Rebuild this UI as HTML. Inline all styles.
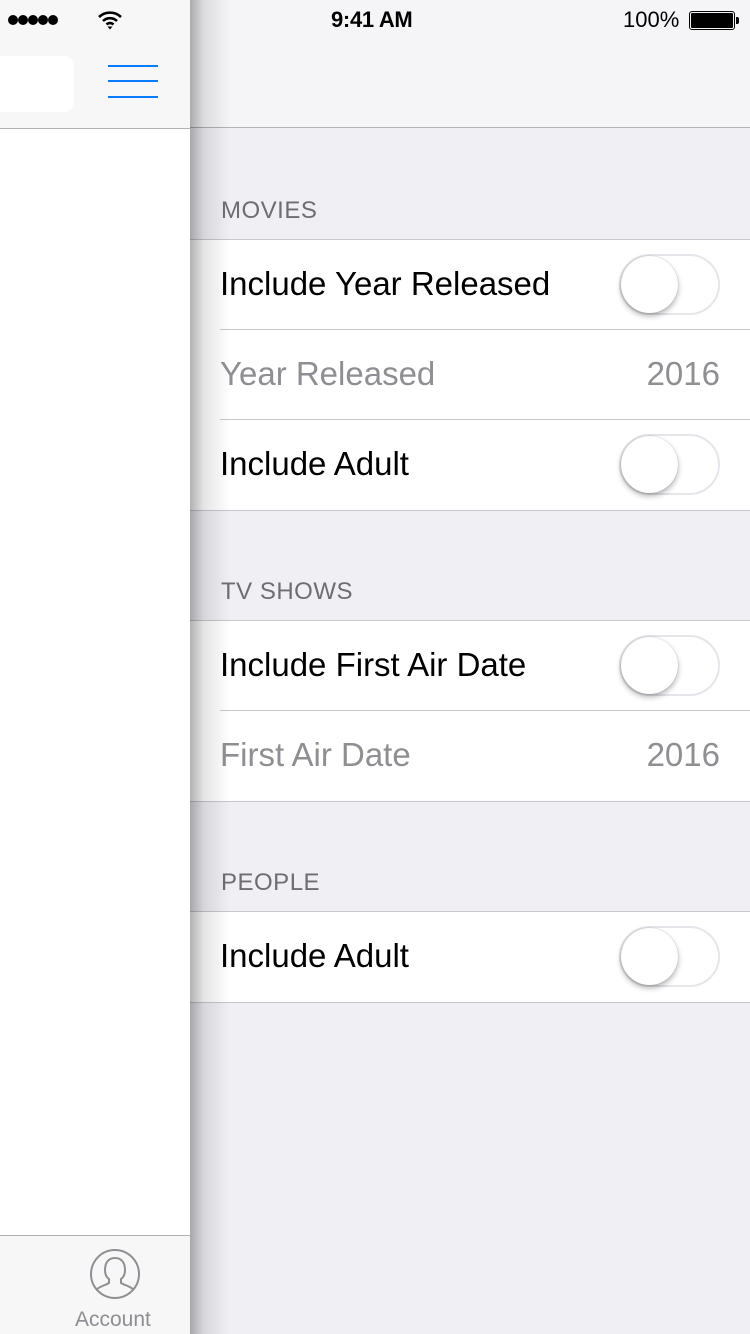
<!DOCTYPE html>
<html><head><meta charset="utf-8"><style>
*{margin:0;padding:0;box-sizing:border-box}
body{width:750px;height:1334px;overflow:hidden;background:#efeff4;font-family:"Liberation Sans",sans-serif;position:relative}
.a{position:absolute}
.nav{left:0;top:0;width:750px;height:128px;background:#f5f5f7;border-bottom:1px solid #b2b2b2}
.hdr{left:221px;font-size:24px;color:#6d6d72;letter-spacing:.5px}
.grp{left:190px;width:560px;background:#fff;border-top:1px solid #c8c7cc;border-bottom:1px solid #c8c7cc}
.row{height:90px;position:relative;border-bottom:1px solid #c8c7cc;margin-left:30px;font-size:33px;line-height:87px;color:#000}
.row:last-child{border-bottom:none}
.g{color:#8e8e93}
.v{position:absolute;right:30px;top:0;color:#8e8e93}
.sw{position:absolute;right:30px;top:14px;width:101px;height:61px;border-radius:31px;border:2px solid #e5e5ea;background:#fff}
.sw:after{content:"";position:absolute;left:0;top:0;width:57px;height:57px;border-radius:50%;background:#fff;box-shadow:0 3px 6px rgba(0,0,0,.3),0 0 1px rgba(0,0,0,.3)}
</style></head><body>
<div class="a nav"></div>
<div class="a" style="left:331px;top:7px;font-size:22px;font-weight:bold;letter-spacing:-0.3px">9:41 AM</div>
<div class="a" style="left:623px;top:7px;font-size:22px;">100%</div>
<div class="a" style="left:689px;top:11px;width:46px;height:19px;border:1.5px solid #000;border-radius:3px;padding:1px"><div style="width:100%;height:100%;background:#000;border-radius:1px"></div></div>
<div class="a" style="left:736px;top:17px;width:3px;height:7px;background:#000;border-radius:0 2px 2px 0"></div>

<div class="a hdr" style="top:197px">MOVIES</div>
<div class="a grp" style="top:239px">
<div class="row">Include Year Released<div class="sw"></div></div>
<div class="row g">Year Released<span class="v">2016</span></div>
<div class="row">Include Adult<div class="sw"></div></div>
</div>
<div class="a hdr" style="top:578px">TV SHOWS</div>
<div class="a grp" style="top:620px">
<div class="row">Include First Air Date<div class="sw"></div></div>
<div class="row g">First Air Date<span class="v">2016</span></div>
</div>
<div class="a hdr" style="top:869px">PEOPLE</div>
<div class="a grp" style="top:911px">
<div class="row">Include Adult<div class="sw"></div></div>
</div>

<!-- left panel -->
<div class="a" style="left:190px;top:0;width:40px;height:1334px;background:linear-gradient(90deg,rgba(0,0,0,.3),rgba(0,0,0,.1) 35%,rgba(0,0,0,0))"></div>
<div class="a" style="left:0;top:0;width:190px;height:1334px;background:#fff">
<div class="a" style="left:0;top:0;width:190px;height:129px;background:#f7f7f7;border-bottom:1px solid #b2b2b2"></div>
<svg class="a" style="left:8px;top:13px" width="50" height="14" viewBox="0 0 50 14"><g fill="#000"><circle cx="5" cy="7" r="5"/><circle cx="15" cy="7" r="5"/><circle cx="25" cy="7" r="5"/><circle cx="35" cy="7" r="5"/><circle cx="45" cy="7" r="5"/></g></svg>
<svg class="a" style="left:97px;top:10px" width="26" height="20" viewBox="0 0 26 20"><path d="M2 7a16 16 0 0 1 22 0M6 11a10 10 0 0 1 14 0M9.5 14.5a5 5 0 0 1 7 0" stroke="#000" stroke-width="2.6" fill="none"/><path d="M10.5 16.5 13 19.5 15.5 16.5z" fill="#000"/></svg>
<div class="a" style="left:-10px;top:56px;width:84px;height:56px;background:#fff;border-radius:10px"></div>
<div class="a" style="left:108px;top:65px;width:50px;height:2px;background:#0a7aff"></div>
<div class="a" style="left:108px;top:80px;width:50px;height:2px;background:#0a7aff"></div>
<div class="a" style="left:108px;top:96px;width:50px;height:2px;background:#0a7aff"></div>
<div class="a" style="left:0;top:1235px;width:190px;height:99px;background:#f7f7f7;border-top:1px solid #b2b2b2"></div>
<svg class="a" style="left:89px;top:1248px" width="52" height="52" viewBox="0 0 52 52"><circle cx="26" cy="26" r="24" stroke="#8e8e93" stroke-width="2" fill="none"/><path d="M7 42c4-4 10-5 13-7v-4c-3-2-4-6-4-9 0-8 4-12 10-12s10 4 10 12c0 3-1 7-4 9v4c3 2 9 3 13 7" stroke="#8e8e93" stroke-width="2" fill="none"/></svg>
<div class="a" style="left:75px;top:1308px;font-size:21px;color:#8e8e93">Account</div>
</div>
</body></html>
